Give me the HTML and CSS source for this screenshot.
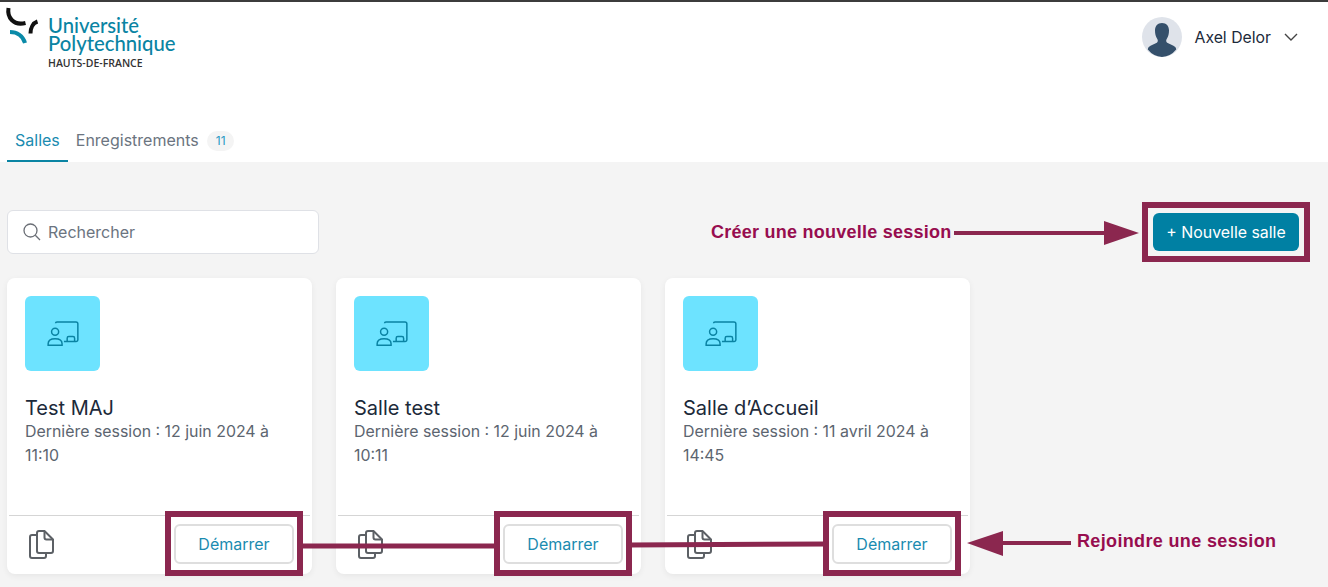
FILE: index.html
```html
<!DOCTYPE html>
<html lang="fr">
<head>
    <meta charset="UTF-8">
    <meta name="viewport" content="width=device-width, initial-scale=1.0">
    <title>Salles</title>
    <link rel="stylesheet" href="styles.css">
</head>
<body>
    <!-- En-tête -->
    <header class="top-bar">
        <div class="logo">
            <svg class="logo-mark" width="40" height="46" viewBox="0 0 40 46" fill="none">
                <path d="M8.500 8C7 17 13 26 25.500 23" stroke="#111" stroke-width="4"/>
                <path d="M37.500 21.500C33 23 30.500 28 30.500 33.500" stroke="#111" stroke-width="4"/>
                <path d="M10 32C17 32 23 36 25 43" stroke="#0a8aa8" stroke-width="4"/>
            </svg>
            <div class="logo-text">
                <span class="logo-name">Université<br>Polytechnique</span>
                <span class="logo-region">HAUTS-DE-FRANCE</span>
            </div>
        </div>
        <div class="user-menu">
            <svg width="40" height="40" viewBox="0 0 40 40">
                <circle cx="20" cy="20" r="20" fill="#dfe3ea"/>
                <path d="M20 6c4.500 0 7 3 7 7.500 0 3-.6 6-2.300 8.500-.8 1.200-.7 3 .5 3.700 2.500 1.300 6 2.400 8 4.300.6.600.9 1.500 1 2.500A20 20 0 0 1 20 40a20 20 0 0 1-14.200-7.500c.1-1 .4-1.900 1-2.500 2-1.900 5.500-3 8-4.300 1.200-.7 1.300-2.500.5-3.700C13.600 19.500 13 16.500 13 13.500 13 9 15.500 6 20 6z" fill="#35506b"/>
            </svg>
            <span class="user-name">Axel Delor</span>
            <svg width="14" height="8" viewBox="0 0 14 8" fill="none">
                <path d="M1 1l6 6 6-6" stroke="#444" stroke-width="1.400"/>
            </svg>
        </div>
    </header>

    <!-- Onglets -->
    <nav class="tabs">
        <a class="tab active">Salles</a>
        <a class="tab">Enregistrements <span class="tab-badge">11</span></a>
    </nav>

    <main class="content">
        <div class="toolbar">
            <div class="search">
                <svg width="18" height="18" viewBox="0 0 18 18" fill="none">
                    <circle cx="7.500" cy="7.500" r="6.500" stroke="#6b6f76" stroke-width="1.300"/>
                    <path d="M12.300 12.300L17 17" stroke="#6b6f76" stroke-width="1.300"/>
                </svg>
                <span>Rechercher</span>
            </div>
            <button class="new-room">+ Nouvelle salle</button>
        </div>

        <div class="cards">
            <div class="card">
                <div class="card-body">
                    <div class="room-icon">
                        <svg width="32" height="26" viewBox="0 0 34 28" fill="none" stroke="#0a83a3" stroke-width="1.600">
                            <path d="M9 2.500C9 1.500 9.500 1 10.500 1H31c1 0 2 .7 2 2v17.500c0 1-.7 1.500-1.700 1.500H18"/>
                            <path d="M21.500 21.500v-3c0-1 .7-1.700 1.700-1.700h4.600c1 0 1.700.7 1.700 1.700v3"/>
                            <circle cx="8.500" cy="11.500" r="3.800"/>
                            <path d="M1 26v-1.500C1 21 4 19 8.500 19s7.500 2 7.500 5.500V26z"/>
                        </svg>
                    </div>
                    <h3>Test MAJ</h3>
                    <p>Dernière session : 12 juin 2024 à 11:10</p>
                </div>
                <div class="card-footer">
                    <svg class="copy-icon" width="25" height="29" viewBox="0 0 25 29" fill="none" stroke="#5c6065" stroke-width="2">
                        <path d="M8 5H3C2 5 1 6 1 7v19c0 1 1 2 2 2h12c1 0 2-1 2-2v-3"/>
                        <path d="M8 3c0-1 1-2 2-2h5.500L24 9.500V21c0 1-1 2-2 2H10c-1 0-2-1-2-2z"/>
                        <path d="M15.500 1v6.500c0 1 1 2 2 2H24"/>
                    </svg>
                    <button class="start">Démarrer</button>
                </div>
            </div>

            <div class="card">
                <div class="card-body">
                    <div class="room-icon">
                        <svg width="32" height="26" viewBox="0 0 34 28" fill="none" stroke="#0a83a3" stroke-width="1.600">
                            <path d="M9 2.500C9 1.500 9.500 1 10.500 1H31c1 0 2 .7 2 2v17.500c0 1-.7 1.500-1.700 1.500H18"/>
                            <path d="M21.500 21.500v-3c0-1 .7-1.700 1.700-1.700h4.600c1 0 1.700.7 1.700 1.700v3"/>
                            <circle cx="8.500" cy="11.500" r="3.800"/>
                            <path d="M1 26v-1.500C1 21 4 19 8.500 19s7.500 2 7.500 5.500V26z"/>
                        </svg>
                    </div>
                    <h3>Salle test</h3>
                    <p>Dernière session : 12 juin 2024 à 10:11</p>
                </div>
                <div class="card-footer">
                    <svg class="copy-icon" width="25" height="29" viewBox="0 0 25 29" fill="none" stroke="#5c6065" stroke-width="2">
                        <path d="M8 5H3C2 5 1 6 1 7v19c0 1 1 2 2 2h12c1 0 2-1 2-2v-3"/>
                        <path d="M8 3c0-1 1-2 2-2h5.500L24 9.500V21c0 1-1 2-2 2H10c-1 0-2-1-2-2z"/>
                        <path d="M15.500 1v6.500c0 1 1 2 2 2H24"/>
                    </svg>
                    <button class="start">Démarrer</button>
                </div>
            </div>

            <div class="card">
                <div class="card-body">
                    <div class="room-icon">
                        <svg width="32" height="26" viewBox="0 0 34 28" fill="none" stroke="#0a83a3" stroke-width="1.600">
                            <path d="M9 2.500C9 1.500 9.500 1 10.500 1H31c1 0 2 .7 2 2v17.500c0 1-.7 1.500-1.700 1.500H18"/>
                            <path d="M21.500 21.500v-3c0-1 .7-1.700 1.700-1.700h4.600c1 0 1.700.7 1.700 1.700v3"/>
                            <circle cx="8.500" cy="11.500" r="3.800"/>
                            <path d="M1 26v-1.500C1 21 4 19 8.500 19s7.500 2 7.500 5.500V26z"/>
                        </svg>
                    </div>
                    <h3>Salle d’Accueil</h3>
                    <p>Dernière session : 11 avril 2024 à 14:45</p>
                </div>
                <div class="card-footer">
                    <svg class="copy-icon" width="25" height="29" viewBox="0 0 25 29" fill="none" stroke="#5c6065" stroke-width="2">
                        <path d="M8 5H3C2 5 1 6 1 7v19c0 1 1 2 2 2h12c1 0 2-1 2-2v-3"/>
                        <path d="M8 3c0-1 1-2 2-2h5.500L24 9.500V21c0 1-1 2-2 2H10c-1 0-2-1-2-2z"/>
                        <path d="M15.500 1v6.500c0 1 1 2 2 2H24"/>
                    </svg>
                    <button class="start">Démarrer</button>
                </div>
            </div>
        </div>
    </main>

    <!-- Annotations posées sur la capture -->
    <svg class="annotations" width="1328" height="587" viewBox="0 0 1328 587" fill="none">
        <g stroke="#8b274f" stroke-width="6">
            <rect x="1145" y="205" width="162" height="54"/>
            <rect x="168" y="514" width="132" height="59"/>
            <rect x="497" y="514" width="132" height="59"/>
            <rect x="826" y="514" width="132" height="59"/>
        </g>
        <path d="M303 546L497 546M629 545L826 544" stroke="#8b274f" stroke-width="5"/>
        <path d="M954 233H1106" stroke="#8b274f" stroke-width="4"/>
        <path d="M1104 221L1139 233L1104 245z" fill="#8b274f"/>
        <path d="M1000 543H1071" stroke="#8b274f" stroke-width="4"/>
        <path d="M1003 531L967 543L1003 556z" fill="#8b274f"/>
    </svg>
    <span class="note note-create">Créer une nouvelle session</span>
    <span class="note note-join">Rejoindre une session</span>
</body>
</html>
```

FILE: styles.css
```css
* {
    box-sizing: border-box;
}
html, body {
    height: 100%;
}
body {
    margin: 0;
    background-color: #f4f4f4;
    font-family: Inter, "Liberation Sans", sans-serif;
    color: #1c2a3a;
    position: relative;
    overflow: hidden;
}
.top-bar {
    display: flex;
    justify-content: space-between;
    align-items: flex-start;
    height: 122px;
    padding: 0 30px 0 0;
    background-color: white;
    border-top: 2px solid #3c3c3c;
}
.logo {
    display: flex;
    align-items: flex-start;
    gap: 8px;
}
.logo-mark {
    margin-top: -2px;
}
.logo-text {
    display: flex;
    flex-direction: column;
    padding-top: 15px;
}
.logo-name {
    font-family: Lato, sans-serif;
    font-size: 20.300px;
    font-weight: 500;
    line-height: 17.500px;
    color: #0a84a3;
}
.logo-region {
    margin-top: 4px;
    font-family: "Open Sans", sans-serif;
    font-size: 10.500px;
    font-weight: 600;
    line-height: 14px;
    color: #333;
}
.user-menu {
    display: flex;
    align-items: center;
    gap: 12px;
    margin-top: 15px;
}
.user-name {
    font-size: 15.800px;
    margin-right: 1px;
}
.tabs {
    display: flex;
    height: 40px;
    padding-left: 7px;
    background-color: white;
}
.tab {
    display: block;
    padding: 6px 8px 0;
    font-size: 16px;
    line-height: 24px;
    color: #6b7480;
}
.tab.active {
    color: #1a8bb0;
    border-bottom: 2px solid #0a84a3;
}
.tab-badge {
    display: inline-block;
    width: 27px;
    height: 20px;
    margin-left: 4px;
    border-radius: 10px;
    background-color: #f4f4f4;
    color: #2b9ac4;
    font-size: 12px;
    line-height: 20px;
    text-align: center;
    vertical-align: 1px;
}
.content {
    padding: 48px 29px 0 7px;
}
.toolbar {
    display: flex;
    justify-content: space-between;
    align-items: center;
    height: 44px;
}
.search {
    display: flex;
    align-items: center;
    gap: 7px;
    width: 312px;
    height: 44px;
    padding-left: 15px;
    background-color: white;
    border: 1px solid #dfe1e6;
    border-radius: 6px;
    font-size: 16px;
    color: #6b7480;
}
.new-room {
    width: 146px;
    height: 38px;
    background-color: #0080a3;
    color: white;
    border: none;
    border-radius: 6px;
    font-family: inherit;
    font-size: 15.900px;
}
.cards {
    display: flex;
    gap: 24px;
    margin-top: 24px;
}
.card {
    display: flex;
    flex-direction: column;
    width: 305px;
    height: 296px;
    background-color: white;
    border-radius: 8px;
    box-shadow: 0 2px 6px rgba(0, 0, 0, 0.06);
}
.card-body {
    flex: 1;
    padding: 18px 18px 0;
}
.room-icon {
    display: flex;
    justify-content: center;
    align-items: center;
    width: 75px;
    height: 75px;
    background-color: #6de3ff;
    border-radius: 6px;
}
.card-body h3 {
    margin: 25px 0 0;
    font-size: 20px;
    font-weight: 400;
    line-height: 24px;
}
.card-body p {
    margin: 0;
    font-size: 15.900px;
    line-height: 24px;
    color: #5c6570;
}
.card-footer {
    display: flex;
    justify-content: space-between;
    align-items: center;
    height: 59px;
    margin: 0 2px;
    padding: 0 16px 3px 20px;
    border-top: 1px solid #d5d5d5;
}
.copy-icon {
    flex-shrink: 0;
    margin-top: 1px;
}
.start {
    width: 120px;
    height: 40px;
    background-color: white;
    border: 2px solid #dedede;
    border-radius: 6px;
    color: #1a8bb0;
    font-family: inherit;
    font-size: 16px;
}
.annotations {
    position: absolute;
    top: 0;
    left: 0;
}
.note {
    position: absolute;
    font-family: "Liberation Sans", sans-serif;
    font-size: 18px;
    font-weight: bold;
    line-height: 20px;
    color: #970d4f;
    white-space: nowrap;
}
.note-create {
    top: 222px;
    left: 711px;
    letter-spacing: 0.25px;
}
.note-join {
    top: 531px;
    left: 1077px;
    letter-spacing: 0.35px;
}
```
